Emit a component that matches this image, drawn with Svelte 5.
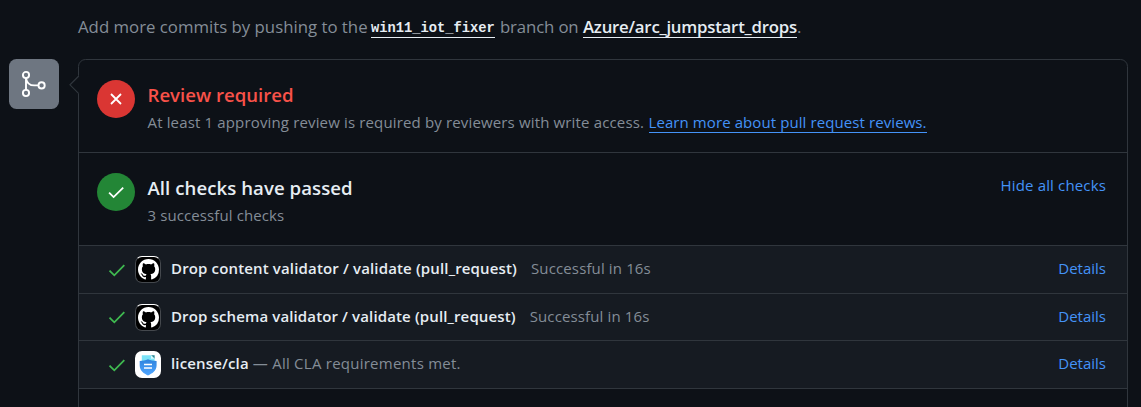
<script>
  const checks = [
    { name: 'Drop content validator / validate (pull_request)', note: 'Successful in 16s', app: 'github', cls: 'content' },
    { name: 'Drop schema validator / validate (pull_request)', note: 'Successful in 16s', app: 'github', cls: 'schema' },
    { name: 'license/cla', note: '— All CLA requirements met.', app: 'cla', cls: 'cla' }
  ];
</script>

<div class="page">
  <p class="hint">
    <span class="h1">Add more commits by pushing to the</span><a class="branch" href="#branch">win11_iot_fixer</a><span class="h2">branch on</span><a class="repo" href="#repo">Azure/arc_jumpstart_drops</a><span>.</span>
  </p>

  <div class="merge">
    <div class="badge">
      <svg width="30" height="30" viewBox="0 0 30 30" fill="none" stroke="#fff" stroke-width="1.9">
        <circle cx="7" cy="6" r="3.1" /><circle cx="7" cy="24" r="3.1" /><circle cx="22.6" cy="16.4" r="3.1" />
        <path d="M7 9.1V20.9M7 9.3C7.8 13.6 11 16.4 15.2 16.4H19.5" />
      </svg>
    </div>

    <div class="box">
      <svg class="caret" width="11" height="20" viewBox="0 0 11 20">
        <path d="M10 1L1.2 9.8L10 18.6" fill="#0d1117" />
        <path d="M10 .7V19" stroke="#0d1117" stroke-width="2" />
        <path d="M9.8 1L1 9.8L9.8 18.6" fill="none" stroke="#30363d" stroke-width="1.2" />
      </svg>
      <section>
        <span class="status red">
          <svg width="38" height="38" viewBox="0 0 38 38"><path d="M14 14L24 24M24 14L14 24" /></svg>
        </span>
        <div class="copy">
          <h3 class="danger">Review required</h3>
          <p><span class="atleast">At least 1 approving review is required by reviewers with write access.</span><a class="learn" href="#reviews">Learn more about pull request reviews.</a></p>
        </div>
      </section>
      <section>
        <span class="status green">
          <svg width="38" height="38" viewBox="0 0 38 38"><path d="M12.1 19.7L16.6 24.1L26.2 14.6" /></svg>
        </span>
        <div class="copy">
          <h3 class="passed">All checks have passed</h3>
          <p><span class="count">3 successful checks</span></p>
        </div>
        <a class="hide" href="#hide">Hide all checks</a>
      </section>
      {#each checks as c}
        <div class="row {c.cls}">
          <svg class="tick" width="18" height="14" viewBox="0 0 18 14"><path d="M1.5 7.6L6.3 12.3L16.3 2.2" fill="none" stroke="#3fb950" stroke-width="1.8" /></svg>
          {#if c.app === 'github'}
            <span class="avatar dark">
              <svg width="21" height="21" viewBox="0 0 16 16"><path fill="#fff" d="M8 0C3.58 0 0 3.58 0 8c0 3.54 2.29 6.53 5.47 7.59.4.07.55-.17.55-.38 0-.19-.01-.82-.01-1.49-2.01.37-2.53-.49-2.69-.94-.09-.23-.48-.94-.82-1.13-.28-.15-.68-.52-.01-.53.63-.01 1.08.58 1.23.82.72 1.21 1.87.87 2.33.66.07-.52.28-.87.51-1.07-1.78-.2-3.64-.89-3.64-3.95 0-.87.31-1.59.82-2.15-.08-.2-.36-1.02.08-2.12 0 0 .67-.21 2.2.82.64-.18 1.32-.27 2-.27s1.36.09 2 .27c1.53-1.04 2.2-.82 2.2-.82.44 1.1.16 1.92.08 2.12.51.56.82 1.27.82 2.15 0 3.07-1.87 3.75-3.65 3.95.29.25.54.73.54 1.48 0 1.07-.01 1.93-.01 2.2 0 .21.15.46.55.38A8.01 8.01 0 0016 8c0-4.42-3.58-8-8-8z" /></svg>
            </span>
          {:else}
            <span class="avatar light">
              <svg width="26" height="27" viewBox="0 0 26 27">
                <defs><linearGradient id="shield" x1="0" y1="0" x2="0" y2="1"><stop offset="0" stop-color="#2f83dd" /><stop offset="1" stop-color="#50a6ff" /></linearGradient></defs>
                <path d="M6.8 4.2H16L19.6 7.8V16H6.8Z" fill="#7ce4f8" />
                <path d="M16 4.2H19.6V7.8Z" fill="#258692" /><path d="M16 4.2V7.8H19.6Z" fill="#d8fbff" />
                <path d="M13 8.3C10.5 9.6 7.5 10 4.7 10V14.6C4.7 19.8 9 22.9 13 24.4C17 22.9 21.6 19.8 21.6 14.6V10C18.5 10 15.5 9.6 13 8.3Z" fill="url(#shield)" />
                <path d="M9 13.5H17M9 17H17" stroke="#fff" stroke-width="1.3" />
              </svg>
            </span>
          {/if}
          <strong>{c.name}</strong><span class="note">{c.note}</span>
          <a class="details" href="#details">Details</a>
        </div>
      {/each}
    </div>
  </div>
</div>

<style>
  :global(body) { background: #0d1117; overflow: hidden; }
  .page { box-sizing: border-box; width: 1141px; height: 407px; overflow: hidden; background: #0d1117; color: #848d97; font: 15px/20px "Open Sans", "Noto Sans", sans-serif; }
  p, h3 { margin: 0; white-space: nowrap; }
  a { color: #4493f8; text-decoration: none; white-space: nowrap; }
  .hint { display: flex; height: 45px; padding: 14px 0 0 78px; font-size: 16.8px; line-height: 26px; }
  .hint a { color: #e6edf3; height: 24px; box-sizing: border-box; border-bottom: 1px solid #e6edf3; }
  .h1 { width: 293px; }
  .hint .branch { width: 124px; margin-right: 5px; font: 700 13.75px/29px "Liberation Mono", monospace; }
  .h2 { width: 83px; letter-spacing: -.15px; }
  .repo { width: 214px; font-weight: 600; letter-spacing: -.23px; }
  .merge { display: flex; padding-left: 9px; }
  .badge { display: grid; place-items: center; width: 50px; height: 50px; margin-right: 19px; border-radius: 7.5px; background: #6e7681; }
  .box { position: relative; box-sizing: border-box; width: 1050px; height: 370px; border: 1px solid #30363d; border-radius: 7.5px; }
  .caret { position: absolute; left: -10px; top: 15px; }
  section { box-sizing: border-box; display: flex; height: 93px; padding: 20px 21px 0 18px; border-bottom: 1px solid #30363d; }
  .status { width: 38px; height: 38px; border-radius: 50%; }
  .status svg { display: block; fill: none; stroke: #fff; stroke-width: 1.8; }
  .red { background: #da3633; }
  .green { background: #238636; }
  .copy { flex: 1; padding: 2px 0 0 12.5px; }
  h3 { margin-bottom: 4px; font-size: 18.6px; font-weight: 600; line-height: 26px; color: #e6edf3; }
  h3.danger { color: #f85149; }
  h3.passed { letter-spacing: .06px; }
  .copy p { display: flex; }
  .atleast { width: 501px; letter-spacing: .15px; }
  .learn { width: 278px; height: 21px; box-sizing: border-box; border-bottom: 1px solid #4493f8; letter-spacing: .09px; }
  .count { letter-spacing: .1px; }
  .hide { margin-top: 1.5px; letter-spacing: .15px; }
  .row { box-sizing: border-box; display: flex; align-items: center; height: 48px; padding: 0 21px 0 29px; border-bottom: 1px solid #30363d; background: #161b22; }
  .row.schema { height: 47px; }
  .tick { margin-right: 9.4px; }
  .avatar { display: grid; place-items: center; box-sizing: border-box; width: 26px; height: 27px; border-radius: 7px; overflow: hidden; }
  .dark { background: #000; border: 1px solid #44484d; border-top-color: #fff; }
  .light { background: #fff; }
  .row strong, .note, .details { position: relative; top: -2px; white-space: nowrap; }
  .schema strong, .schema .note, .schema .details { top: -1px; }
  .row strong { margin-left: 9.6px; font-weight: 600; letter-spacing: .15px; color: #e6edf3; }
  .row.schema strong { letter-spacing: .13px; }
  .note { margin-left: 14px; letter-spacing: .13px; }
  .cla .note { margin-left: 4px; letter-spacing: .25px; }
  .details { margin-left: auto; }
</style>
